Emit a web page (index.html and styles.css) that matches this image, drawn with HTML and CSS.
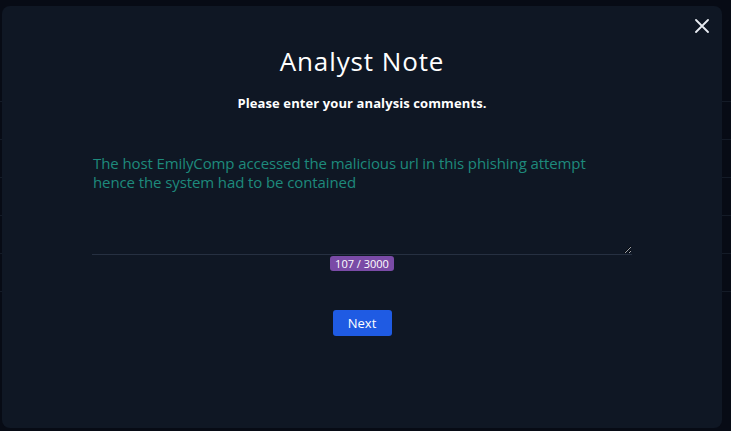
FILE: index.html
```html
<!DOCTYPE html>
<html lang="en">
<head>
    <meta charset="UTF-8">
    <meta name="viewport" content="width=device-width, initial-scale=1.0">
    <title>Analyst Note</title>
    <link rel="stylesheet" href="styles.css">
</head>
<body>
    <div class="backdrop">
        <div class="bg-row"></div>
        <div class="bg-row"></div>
        <div class="bg-row"></div>
        <div class="bg-row"></div>
        <div class="bg-row"></div>
        <div class="bg-row"></div>
    </div>
    <div class="modal">
        <button class="close" aria-label="Close">
            <svg width="14" height="14" viewBox="0 0 14 14">
                <path d="M1 1 L13 13 M13 1 L1 13" stroke="#e8ecf2" stroke-width="1.8" stroke-linecap="round"/>
            </svg>
        </button>
        <h1>Analyst Note</h1>
        <p class="subtitle">Please enter your analysis comments.</p>
        <div class="note">
            <textarea spellcheck="false">The host EmilyComp accessed the malicious url in this phishing attempt hence the system had to be contained</textarea>
            <span class="counter">107 / 3000</span>
        </div>
        <button class="next">Next</button>
    </div>
</body>
</html>
```
FILE: styles.css
```css
* {
    box-sizing: border-box;
}

body {
    margin: 0;
    width: 731px;
    height: 431px;
    overflow: hidden;
    background-color: #070b15;
    font-family: "Open Sans", "Liberation Sans", sans-serif;
    position: relative;
}

.backdrop {
    padding-top: 64px;
}

.bg-row {
    height: 38px;
    border-bottom: 1px solid #141b27;
}

.modal {
    position: absolute;
    left: 2px;
    top: 6px;
    width: 720px;
    height: 422px;
    background-color: #0f1724;
    border-radius: 8px;
    display: flex;
    flex-direction: column;
    align-items: center;
    padding-top: 37px;
}

.close {
    position: absolute;
    top: 13px;
    right: 13px;
    background: none;
    border: none;
    padding: 0;
    cursor: pointer;
}

h1 {
    margin: 0;
    color: #ffffff;
    font-size: 26px;
    font-weight: 500;
    letter-spacing: 0.9px;
}

.subtitle {
    margin: 15px 0 0;
    color: #ffffff;
    font-size: 13px;
    font-weight: 700;
    letter-spacing: 0.1px;
}

.note {
    margin-top: 39px;
    width: 540px;
    display: flex;
    flex-direction: column;
    align-items: center;
}

textarea {
    width: 540px;
    height: 104px;
    background: transparent;
    border: none;
    border-bottom: 1px solid #263041;
    color: #1e8a7c;
    font-family: "Open Sans", "Liberation Sans", sans-serif;
    font-size: 15px;
    line-height: 19px;
    letter-spacing: -0.1px;
    padding: 3px 20px 0 1px;
    resize: vertical;
    outline: none;
}

.counter {
    margin-top: 1px;
    background-color: #7a4ba6;
    color: #ffffff;
    font-size: 11px;
    padding: 1px 5px;
    border-radius: 3px;
    line-height: 13px;
}

.next {
    margin-top: 39px;
    background-color: #1f5be3;
    color: #ffffff;
    border: none;
    border-radius: 3px;
    font-family: "Open Sans", "Liberation Sans", sans-serif;
    font-size: 13px;
    font-weight: 500;
    width: 59px;
    height: 26px;
    cursor: pointer;
}
```
